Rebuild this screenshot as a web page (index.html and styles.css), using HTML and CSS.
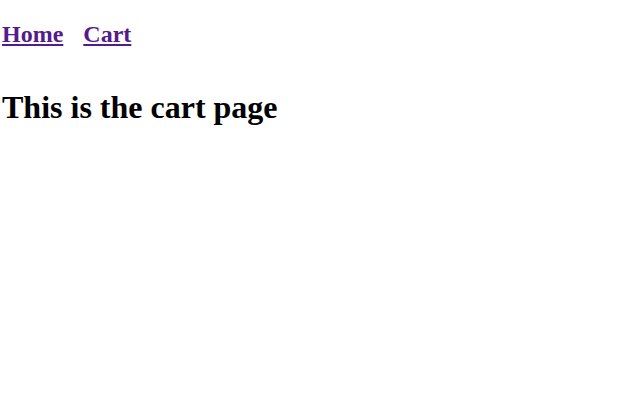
FILE: index.html
```html
<!DOCTYPE html>
<html>
<head>
<meta charset="utf-8">
<link rel="stylesheet" href="styles.css">
</head>
<body>
<nav class="nav">
  <a class="nav-link" href="#">Home</a>
  <a class="nav-link" href="#">Cart</a>
</nav>
<h1 class="title">This is the cart page</h1>
</body>
</html>
```
FILE: styles.css
```css
body {
  margin: 0;
  padding: 0 2px;
  font-family: "Liberation Serif", "Times New Roman", serif;
  background: #fff;
  color: #000;
}
.nav {
  display: flex;
  gap: 20px;
  margin-top: 21px;
  font-size: 24px;
  font-weight: bold;
}
.nav-link {
  color: #551a8b;
  text-decoration: underline;
}
.title {
  font-size: 32px;
  font-weight: bold;
  margin: 41px 0 0;
}
```
